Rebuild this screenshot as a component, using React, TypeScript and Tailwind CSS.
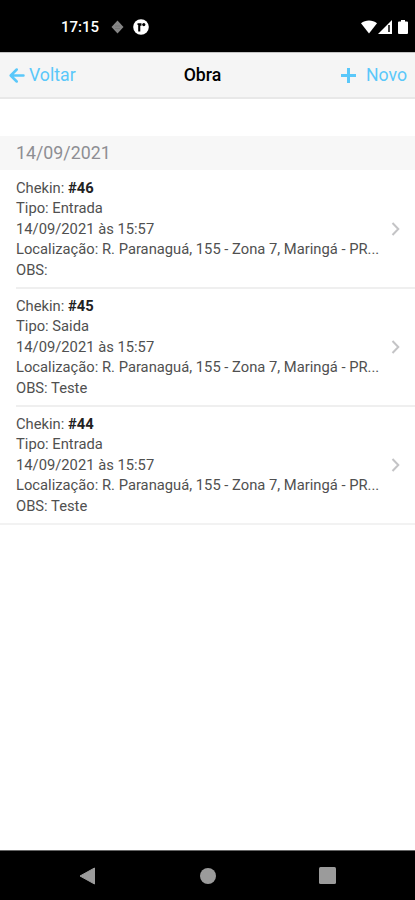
import React from 'react';

interface Checkin {
  id: number;
  type: string;
  date: string;
  location: string;
  note?: string;
}

const checkins: Checkin[] = [
  { id: 46, type: 'Entrada', date: '14/09/2021 às 15:57', location: 'R. Paranaguá, 155 - Zona 7, Maringá - PR...' },
  { id: 45, type: 'Saida', date: '14/09/2021 às 15:57', location: 'R. Paranaguá, 155 - Zona 7, Maringá - PR...', note: 'Teste' },
  { id: 44, type: 'Entrada', date: '14/09/2021 às 15:57', location: 'R. Paranaguá, 155 - Zona 7, Maringá - PR...', note: 'Teste' },
];

const StatusBar = () => (
  <div className="h-[52px] shrink-0 bg-black text-white flex items-center justify-between pl-[61px] pr-[7px] pt-[2px]">
    <div className="flex items-center">
      <span className="w-[38px] text-[15px] leading-5 font-medium whitespace-nowrap">17:15</span>
      <svg className="ml-[12px]" width="13" height="14" viewBox="0 0 13 14">
        <path d="M6.5 .5 12.5 7l-6 6.5L.5 7z" fill="#858585" />
        <path d="M4 6h5M4 8.5h5" stroke="#707070" strokeWidth=".7" />
      </svg>
      <svg className="ml-[9px]" width="16" height="16" viewBox="0 0 16 16">
        <circle cx="8" cy="8" r="7.8" fill="#fff" />
        <path d="M4.5 4.2h4v2.600H7.300v5.700H5.200V6H4.500z" />
        <circle cx="10.800" cy="5.600" r="1.600" />
      </svg>
    </div>
    <div className="flex items-center">
      <svg width="16" height="14" viewBox="0 0 16 14">
        <path d="M0 3.2C4.5-.4 11.5-.4 16 3.2L8 13.5z" fill="#fff" />
      </svg>
      <svg className="ml-[1px]" width="14" height="14" viewBox="0 0 14 14">
        <path d="M14 0v14H0z" fill="#fff" />
        <path d="M11 5v7" stroke="#000" strokeWidth="1.5" />
      </svg>
      <svg className="ml-[6px]" width="10" height="14" viewBox="0 0 10 14">
        <path d="M3 0h4v1.5h2a1 1 0 0 1 1 1V13a1 1 0 0 1-1 1H1a1 1 0 0 1-1-1V2.5a1 1 0 0 1 1-1h2z" fill="#fff" />
      </svg>
    </div>
  </div>
);

const Header = () => (
  <header className="h-[47px] shrink-0 bg-[#f5f5f5] border-t border-b-2 border-t-[#c4c4c4] border-b-[#e8e8e8] flex items-center justify-between pl-[9px] pr-[8px] pt-px text-[17.7px] text-[#5ac8fa]">
    <button type="button" className="w-[100px] flex items-center">
      <svg width="16" height="15" viewBox="0 0 16 15" fill="none" stroke="currentColor" strokeWidth="2.5" strokeLinecap="round" strokeLinejoin="round">
        <path d="M7.7 1.5 1.7 7.5l6 6M2 7.5h12.500" />
      </svg>
      <span className="ml-[4px]">Voltar</span>
    </button>
    <h1 className="text-center text-black font-medium pr-[11px]">Obra</h1>
    <button type="button" className="w-[100px] flex items-center justify-end">
      <svg width="15" height="15" viewBox="0 0 15 15" stroke="currentColor" strokeWidth="3">
        <path d="M7.5 0v15M0 7.5h15" />
      </svg>
      <span className="ml-[10px]">Novo</span>
    </button>
  </header>
);

const CheckinRow = ({ item, last }: { item: Checkin; last: boolean }) => (
  <li className={last ? 'border-b-2 border-[#f2f2f2]' : ''}>
    <div className={`flex items-center text-[14.75px] leading-[20.4px] text-[#505050] ml-4 pr-[15px] py-[7px] ${last ? '' : 'border-b-2 border-[#efefef]'}`}>
      <div className="flex-1 whitespace-nowrap">
        <p>Chekin: <b className="font-bold text-[#222]">#{item.id}</b></p>
        <p>Tipo: {item.type}</p>
        <p>{item.date}</p>
        <p>Localização: {item.location}</p>
        <p>OBS: {item.note}</p>
      </div>
      <svg width="9" height="14" viewBox="0 0 9 14" fill="none" stroke="#c4c4c6" strokeWidth="2">
        <path d="M1.5 1 7.3 7l-5.8 6" />
      </svg>
    </div>
  </li>
);

const NavigationBar = () => (
  <div className="h-[50px] shrink-0 bg-black border-t border-[#666] flex items-center justify-between px-[79px]">
    <svg width="17" height="18" viewBox="0 0 17 18">
      <path d="M1 9 15.5 1v16z" fill="#9b9b9b" stroke="#9b9b9b" strokeLinejoin="round" />
    </svg>
    <div className="size-4 rounded-full bg-[#9b9b9b]" />
    <div className="size-[17px] rounded-[1.5px] bg-[#9b9b9b]" />
  </div>
);

const App: React.FC = () => (
  <div className="h-[900px] w-[415px] overflow-hidden bg-white flex flex-col font-['Roboto',sans-serif]">
    <StatusBar />
    <Header />
    <main className="flex-1 pt-[37px]">
      <h2 className="h-[34px] bg-[#f7f7f7] pl-4 text-[17.8px] leading-[33px] text-[#8e8e93]">14/09/2021</h2>
      <ul className="pt-px">
        {checkins.map((item, i) => (
          <CheckinRow key={item.id} item={item} last={i === checkins.length - 1} />
        ))}
      </ul>
    </main>
    <NavigationBar />
  </div>
);

export default App;
